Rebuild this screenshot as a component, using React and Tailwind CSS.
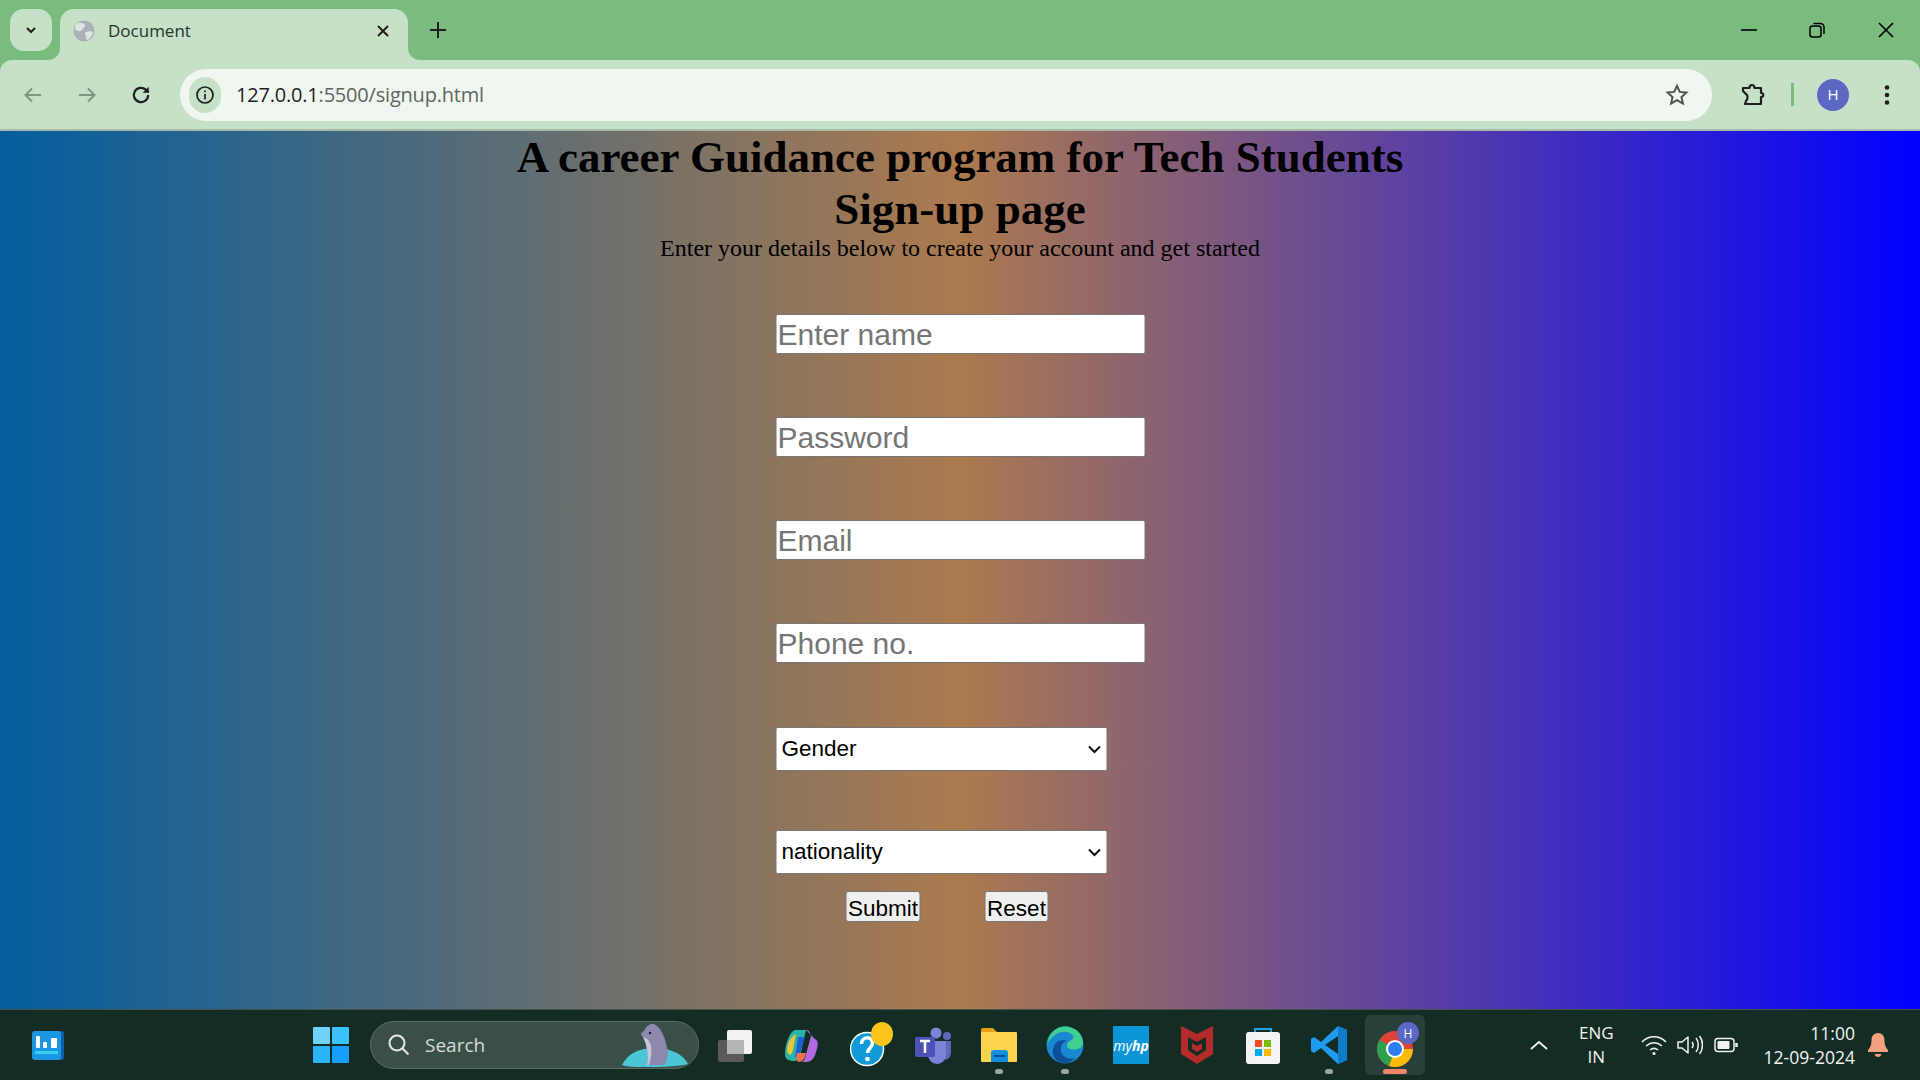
import React from "react";

const TabStrip = () => (
  <div className="flex h-[60px] items-start bg-[#7abc7e] pt-[9px] pl-[10px]">
    <div className="flex h-[42px] w-[42px] items-center justify-center rounded-[14px] bg-[#c5e1c7]">
      <svg width="14" height="14" viewBox="0 0 14 14" fill="none" stroke="#1f1f1f" strokeWidth="2">
        <path d="M3 5l4 4 4-4" />
      </svg>
    </div>
    <div className="relative ml-[8px] flex h-[51px] w-[348px] items-center rounded-t-[14px] bg-[#c5e1c7] pb-[8px] pl-[13px] pr-[18px]">
      <svg className="absolute bottom-0 left-[-12px]" width="12" height="12" viewBox="0 0 12 12">
        <path d="M0 12a12 12 0 0 0 12-12v12z" fill="#c5e1c7" />
      </svg>
      <svg className="absolute bottom-0 right-[-12px]" width="12" height="12" viewBox="0 0 12 12">
        <path d="M12 12A12 12 0 0 1 0 0v12z" fill="#c5e1c7" />
      </svg>
      <svg width="22" height="22" viewBox="0 0 22 22">
        <circle cx="11" cy="11" r="10.5" fill="#aab1b8" />
        <path d="M5 3c3 0 6 0 7 2s-2 3-3 5-4 1-6 0-1-5 2-7zM13 12c3-1 6-1 7 0-1 4-3 7-6 8-2-1 0-3-1-4s-2-3 0-4z" fill="#dfe6e2" />
      </svg>
      <span className="ml-[13px] flex-1 font-['Open_Sans',sans-serif] text-[17px] text-[#2a332b]">Document</span>
      <svg width="14" height="14" viewBox="0 0 14 14" fill="none" stroke="#1f1f1f" strokeWidth="2">
        <path d="M2 2l10 10M12 2L2 12" />
      </svg>
    </div>
    <div className="ml-[21px] mt-[12px] h-[20px]">
      <svg width="18" height="18" viewBox="0 0 18 18" fill="none" stroke="#1f1f1f" strokeWidth="2">
        <path d="M9 1v16M1 9h16" />
      </svg>
    </div>
    <div className="ml-auto flex items-center pt-[13px]">
      <svg className="mr-[52px]" width="16" height="4" viewBox="0 0 16 4" stroke="#000" strokeWidth="1.6">
        <path d="M0 2h16" />
      </svg>
      <svg className="mr-[53px]" width="16" height="16" viewBox="0 0 16 16" fill="none" stroke="#000" strokeWidth="1.5">
        <rect x="1" y="4" width="11" height="11" rx="2.5" />
        <path d="M4.5 1.5h7a3.5 3.5 0 0 1 3.500 3.500v7" />
      </svg>
      <svg className="mr-[26px]" width="16" height="16" viewBox="0 0 16 16" stroke="#000" strokeWidth="1.6">
        <path d="M1 1l14 14M15 1L1 15" />
      </svg>
    </div>
  </div>
);

const Toolbar = () => (
  <div className="bg-[#7abc7e]">
    <div className="flex h-[69px] items-center rounded-t-[12px] bg-[#c5e1c7] pl-[23px] pr-[30px]">
      <svg width="20" height="20" viewBox="0 0 20 20" fill="none" stroke="#7f9481" strokeWidth="2">
        <path d="M18 10H3M9 3.500L2.500 10 9 16.500" />
      </svg>
      <svg className="ml-[34px]" width="20" height="20" viewBox="0 0 20 20" fill="none" stroke="#7f9481" strokeWidth="2">
        <path d="M2 10h15M11 3.500l6.500 6.500-6.500 6.500" />
      </svg>
      <svg className="ml-[33px]" width="22" height="22" viewBox="0 0 20 20" fill="none" stroke="#1f1f1f" strokeWidth="2">
        <path d="M16.500 10a6.500 6.500 0 1 1-2-4.700L17 7.500" />
        <path d="M17 2.500v5.500h-5.500" fill="#1f1f1f" stroke="none" />
      </svg>
      <div className="ml-[28px] flex h-[52px] flex-1 items-center rounded-full bg-[#f0f7f1] pl-[9px] pr-[23px]">
        <div className="flex h-[36px] w-[32px] items-center justify-center rounded-full bg-[#c5e1c7]">
          <svg width="20" height="20" viewBox="0 0 20 20" fill="none" stroke="#1f1f1f" strokeWidth="1.700">
            <circle cx="10" cy="10" r="8" />
            <path d="M10 9v5.500M10 5.500v1.800" />
          </svg>
        </div>
        <span className="ml-[15px] flex-1 font-['Open_Sans',sans-serif] text-[20px] tracking-[-0.2px] text-[#5f6660]">
          <span className="text-[#1f1f1f]">127.0.0.1</span>:5500/signup.html
        </span>
        <svg width="24" height="24" viewBox="0 0 24 24" fill="none" stroke="#4d5350" strokeWidth="2">
          <path d="M12 2.800l2.800 6.100 6.600.7-4.900 4.500 1.400 6.500-5.900-3.400-5.900 3.400 1.400-6.500-4.900-4.500 6.600-.7z" />
        </svg>
      </div>
      <svg className="ml-[28px]" width="26" height="26" viewBox="0 0 26 26" fill="none" stroke="#1f1f1f" strokeWidth="2.200">
        <path d="M3 6h6.500c0-4 5-4 5 0H21v5c3 0 3 4 0 4v7H5l1-3c2-2 2-6 0-7L3 9z" strokeLinejoin="round" />
      </svg>
      <div className="ml-[25px] h-[23px] w-[3px] bg-[#7abc7e]" />
      <div className="ml-[23px] flex h-[32px] w-[32px] items-center justify-center rounded-full bg-[#5b68c3] font-['Open_Sans',sans-serif] text-[15px] text-white">
        H
      </div>
      <svg className="ml-[35px]" width="6" height="22" viewBox="0 0 6 22" fill="#1f1f1f">
        <circle cx="3" cy="3.500" r="2.300" />
        <circle cx="3" cy="11" r="2.300" />
        <circle cx="3" cy="18.500" r="2.300" />
      </svg>
    </div>
    <div className="h-[2px] bg-[#a8b9a9]" />
  </div>
);

const Chevron = () => (
  <svg
    className="pointer-events-none absolute right-[5px] top-[14px]"
    width="16"
    height="16"
    viewBox="0 0 16 16"
    fill="none"
    stroke="#111"
    strokeWidth="2"
  >
    <path d="M2.500 5.500L8 11l5.500-5.500" />
  </svg>
);

const SignUpPage = () => (
  <div className="h-[878px] bg-[linear-gradient(to_right,#035e9f,#ac7a4e,#0000ff)] font-['Liberation_Serif',serif] text-black">
    <h1 className="text-center text-[45px] font-bold leading-[52px]">
      A career Guidance program for Tech Students
    </h1>
    <h1 className="text-center text-[45px] font-bold leading-[52px]">Sign-up page</h1>
    <p className="text-center text-[24px] leading-[27px]">
      Enter your details below to create your account and get started
    </p>
    <form className="mx-auto mt-[52px] w-[370px] translate-x-[0.5px] font-['Liberation_Sans',sans-serif]">
      <input
        type="text"
        placeholder="Enter name"
        className="mb-[63px] block h-[40px] w-full rounded-[2px] border border-[#767676] bg-white px-[1px] text-[30px] placeholder:text-[#757575]"
      />
      <input
        type="password"
        placeholder="Password"
        className="mb-[63px] block h-[40px] w-full rounded-[2px] border border-[#767676] bg-white px-[1px] text-[30px] placeholder:text-[#757575]"
      />
      <input
        type="email"
        placeholder="Email"
        className="mb-[63px] block h-[40px] w-full rounded-[2px] border border-[#767676] bg-white px-[1px] text-[30px] placeholder:text-[#757575]"
      />
      <input
        type="text"
        placeholder="Phone no."
        className="mb-[64px] block h-[40px] w-full rounded-[2px] border border-[#767676] bg-white px-[1px] text-[30px] placeholder:text-[#757575]"
      />
      <div className="relative mb-[59px] w-[332px]">
        <select className="block h-[44px] w-full appearance-none rounded-[2px] border border-[#767676] bg-white pl-[5px] text-[22.5px] text-black">
          <option>Gender</option>
          <option>Male</option>
          <option>Female</option>
        </select>
        <Chevron />
      </div>
      <div className="relative w-[332px]">
        <select className="block h-[44px] w-full appearance-none rounded-[2px] border border-[#767676] bg-white pl-[5px] text-[22.5px] text-black">
          <option>nationality</option>
          <option>Indian</option>
          <option>Other</option>
        </select>
        <Chevron />
      </div>
      <div className="mt-[17px] flex pl-[70px]">
        <button type="submit" className="h-[31px] w-[75px] rounded-[3px] border border-[#767676] bg-[#efefef] text-[22.5px]">
          Submit
        </button>
        <button type="reset" className="ml-[64px] h-[31px] w-[64px] rounded-[3px] border border-[#767676] bg-[#efefef] text-[22.5px]">
          Reset
        </button>
      </div>
    </form>
  </div>
);

const TaskIcon = ({ children, dot, active }) => (
  <div className="flex h-[60px] w-[66px] justify-center">
    <div
      className={
        "relative flex h-[60px] w-[60px] items-center justify-center rounded-[6px] " +
        (active ? "bg-[#27403a]" : "")
      }
    >
      {children}
      {dot && <div className="absolute bottom-[1px] h-[5px] w-[8px] rounded-full bg-[#9aa5a1]" />}
      {active && <div className="absolute bottom-[1px] h-[5px] w-[24px] rounded-full bg-[#ee8468]" />}
    </div>
  </div>
);

const Taskbar = () => (
  <div className="flex h-[71px] items-center border-t border-[#46534c] bg-[#132d25] font-['Open_Sans',sans-serif] text-white">
    {/* widgets */}
    <svg className="ml-[31px]" width="34" height="34" viewBox="0 0 34 34">
      <rect x="4" y="3" width="29" height="29" rx="3" fill="#0f5fa8" />
      <rect x="1" y="3" width="29" height="29" rx="3" fill="#1a97e0" />
      <rect x="5" y="8" width="4" height="12" rx="1" fill="#fff" />
      <rect x="12" y="14" width="4" height="6" rx="1" fill="#fff" />
      <rect x="20" y="10" width="6" height="10" rx="1" fill="#fff" />
      <rect x="4" y="23" width="23" height="3" fill="#35d1ee" />
    </svg>
    {/* start */}
    <svg className="ml-[248px]" width="36" height="36" viewBox="0 0 36 36">
      <rect x="0" y="0" width="17" height="17" rx="1" fill="#6fd2fb" />
      <rect x="19" y="0" width="17" height="17" rx="1" fill="#3cc2fb" />
      <rect x="0" y="19" width="17" height="17" rx="1" fill="#29b4fb" />
      <rect x="19" y="19" width="17" height="17" rx="1" fill="#159efa" />
    </svg>
    {/* search */}
    <div className="ml-[21px] flex h-[48px] w-[329px] items-center rounded-full border border-[#5a6c65] bg-[#3a4f47] pl-[16px]">
      <svg width="24" height="24" viewBox="0 0 24 24" fill="none" stroke="#e6e9e7" strokeWidth="2">
        <circle cx="10" cy="10" r="7.500" />
        <path d="M15.500 15.500l6 6" />
      </svg>
      <span className="ml-[14px] flex-1 text-[19px] text-[#d8dcda]">Search</span>
      <svg className="mr-[8px]" width="70" height="44" viewBox="0 0 70 44">
        <path d="M2 42c6-12 18-17 33-17s28 6 33 16c-8 3-58 5-66 1z" fill="#4cc6d6" />
        <path d="M23 14c-3-2-2-5 1-6 2-5 7-8 10-7 7 3 12 14 14 30-1 5-2 9-4 11H27c2-10 0-20-4-28z" fill="#8e88ad" />
        <path d="M23 14c4 1 7 4 8 9 1 6 0 13-2 19h-2c2-10 0-20-4-28z" fill="#c9c6da" />
        <circle cx="30" cy="10" r="1.200" fill="#1b1b2b" />
      </svg>
    </div>
    {/* pinned apps */}
    <div className="ml-[3px] flex items-center">
      <TaskIcon>
        <svg width="36" height="36" viewBox="0 0 36 36">
          <rect x="1" y="13" width="26" height="22" rx="2" fill="#5a5a5a" />
          <rect x="10" y="3" width="25" height="24" rx="2" fill="#f2f2f2" />
          <rect x="10" y="13" width="17" height="14" fill="#b5b5b5" />
        </svg>
      </TaskIcon>
      <TaskIcon>
        <svg width="36" height="36" viewBox="0 0 36 36">
          <path d="M12 3h11l-6 26c-1 4-3 5-6 5-6 0-9-2-9-7 0-8 4-22 10-24z" fill="#2ab3a8" />
          <path d="M4 24c0-8 4-15 9-17l-3 16c-1 4-3 8-6 1z" fill="#e8c53a" />
          <path d="M23 3c3 0 4 2 5 6l-6 22c-1 3-2 4-6 4h7c5 0 8-3 10-10 2-6 3-11-1-13z" fill="#b46ae0" />
          <path d="M15 10h7l-5 16c-1 2-2 4-5 4z" fill="#1d5fd6" />
          <path d="M15 35c-2-3-2-6-1-9h9c-1 5-3 9-8 9z" fill="#f0714a" />
        </svg>
      </TaskIcon>
      <TaskIcon>
        <svg className="ml-[10px]" width="44" height="46" viewBox="0 0 44 46">
          <circle cx="17" cy="27" r="16.500" fill="#0d9ad6" stroke="#fff" strokeWidth="1.500" />
          <path d="M11.500 22c0-8 11-8 11-1 0 5-5 5-5 10" fill="none" stroke="#fff" strokeWidth="3.500" />
          <circle cx="17.500" cy="37" r="2.300" fill="#fff" />
          <ellipse cx="32" cy="12" rx="11" ry="12" fill="#fcc419" />
        </svg>
      </TaskIcon>
      <TaskIcon>
        <svg width="38" height="38" viewBox="0 0 38 38">
          <circle cx="22" cy="7" r="5.500" fill="#7b83d6" />
          <circle cx="33" cy="10" r="4" fill="#5f67b8" />
          <path d="M28 15h9v11c0 5-3 8-7 8z" fill="#5f67b8" />
          <path d="M14 15h18v14a9 9 0 0 1-18 0z" fill="#7b83d6" />
          <rect x="1" y="11" width="20" height="20" rx="2" fill="#4b53b8" />
          <path d="M6 15h10M11 15v12" stroke="#fff" strokeWidth="2.500" />
        </svg>
      </TaskIcon>
      <TaskIcon dot>
        <svg width="38" height="36" viewBox="0 0 38 36">
          <path d="M1 3a2 2 0 0 1 2-2h10l4 4h-16z" fill="#e3a21a" />
          <path d="M1 5h35a1 1 0 0 1 1 1v28a1 1 0 0 1-1 1H2a1 1 0 0 1-1-1z" fill="#fcd34d" />
          <path d="M11 35v-9a3 3 0 0 1 3-3h11a3 3 0 0 1 3 3v9z" fill="#0f8fe0" />
          <path d="M14 29h11" stroke="#074f96" strokeWidth="2" />
        </svg>
      </TaskIcon>
      <TaskIcon dot>
        <svg width="38" height="38" viewBox="0 0 38 38">
          <circle cx="19" cy="19" r="18.500" fill="#1b87d0" />
          <path d="M1 19C2 8 10 .5 19 .5c11 0 18 8 18 16 0 5-4 7-9 7-4 0-7-1-7-4 0-6 8-4 6-10C24 5 15 4 9 9c-4 3-7 6-8 10z" fill="#3fcf90" />
          <path d="M16 37c-8-2-11-10-8-17 2-5 8-7 13-5-5 1-7 5-6 10 1 6 8 9 14 7-4 4-8 6-13 5z" fill="#0f4f96" />
        </svg>
      </TaskIcon>
      <TaskIcon>
        <div className="flex h-[38px] w-[36px] items-center justify-center bg-[#0a96d6] text-[14px] italic text-white">
          my<span className="font-bold">hp</span>
        </div>
      </TaskIcon>
      <TaskIcon>
        <svg width="32" height="38" viewBox="0 0 32 38">
          <path d="M0 0l16 8 16-8v28l-16 10L0 28z" fill="#b32b2b" />
          <path d="M7 11l9 5 9-5v13l-9 6-9-6z" fill="#132d25" />
          <path d="M11 17l5 3 5-3v6l-5 3-5-3z" fill="#b32b2b" />
        </svg>
      </TaskIcon>
      <TaskIcon>
        <svg width="36" height="38" viewBox="0 0 36 38">
          <path d="M10 7V3h16v4" fill="none" stroke="#1fa3e0" strokeWidth="2" />
          <rect x="1" y="6" width="34" height="32" rx="3" fill="#f4f4f4" />
          <rect x="10" y="14" width="7" height="7" fill="#f25022" />
          <rect x="19" y="14" width="7" height="7" fill="#7fba00" />
          <rect x="10" y="23" width="7" height="7" fill="#00a4ef" />
          <rect x="19" y="23" width="7" height="7" fill="#ffb900" />
        </svg>
      </TaskIcon>
      <TaskIcon dot>
        <svg width="36" height="38" viewBox="0 0 36 38">
          <path d="M27 0l9 4v30l-9 4-17-16-7 5-3-2v-12l3-2 7 5z" fill="#1f9cf0" />
          <path d="M27 10L14 19l13 9z" fill="#132d25" />
          <path d="M27 0l9 4v30l-9 4z" fill="#0e7cc8" />
        </svg>
      </TaskIcon>
      <TaskIcon active>
        <svg className="ml-[6px]" width="44" height="46" viewBox="0 0 44 46">
          <circle cx="19" cy="27" r="18" fill="#dc4437" />
          <path d="M19 27L3.500 18A18 18 0 0 0 13 44z" fill="#2ea24f" />
          <path d="M19 27l-6 17a18 18 0 0 0 24-17z" fill="#fbbc05" />
          <circle cx="19" cy="27" r="9" fill="#fff" />
          <circle cx="19" cy="27" r="7" fill="#2a7fed" />
          <circle cx="32" cy="11" r="11" fill="#5b68c3" />
          <text x="32" y="15.500" textAnchor="middle" fontSize="12" fontFamily="Open Sans, sans-serif" fill="#fff">H</text>
        </svg>
      </TaskIcon>
    </div>
    {/* tray */}
    <svg className="ml-[102px]" width="18" height="10" viewBox="0 0 18 10" fill="none" stroke="#f2f2f2" strokeWidth="1.800">
      <path d="M1 9l8-7 8 7" />
    </svg>
    <div className="ml-[31px] text-center text-[17px] leading-[24px] text-[#f2f2f2]">
      <div>ENG</div>
      <div>IN</div>
    </div>
    <svg className="ml-[27px]" width="26" height="22" viewBox="0 0 26 22" fill="none" stroke="#f2f2f2" strokeWidth="1.600">
      <path d="M1 8c7-7 17-7 24 0M5 12c5-4 11-4 16 0M9 16c2.500-2 5.500-2 8 0" />
      <circle cx="13" cy="19.500" r="1.500" fill="#f2f2f2" stroke="none" />
    </svg>
    <svg className="ml-[10px]" width="26" height="22" viewBox="0 0 26 22" fill="none" stroke="#f2f2f2" strokeWidth="1.500">
      <path d="M1 8v6h4l6 5V3L5 8z" strokeLinejoin="round" />
      <path d="M15 8c1.500 2 1.500 4 0 6M19 4c3 4 3 10 0 14M22.500 2c4 5 4 13 0 18" />
    </svg>
    <svg className="ml-[11px]" width="24" height="16" viewBox="0 0 24 16" fill="none" stroke="#f2f2f2" strokeWidth="1.500">
      <rect x="1" y="1.500" width="19" height="13" rx="3" />
      <rect x="3.500" y="4" width="12" height="8" rx="1" fill="#f2f2f2" stroke="none" />
      <path d="M22.500 6v4" strokeWidth="2.500" />
    </svg>
    <div className="ml-[26px] text-right text-[17.5px] leading-[24px] text-[#f2f2f2]">
      <div>11:00</div>
      <div>12-09-2024</div>
    </div>
    <svg className="ml-[12px]" width="22" height="26" viewBox="0 0 22 26" fill="#f5a07e">
      <path d="M11 1c-4 0-6.500 3-6.500 7 0 5-1 7-3.500 10v2h20v-2c-2.500-3-3.500-5-3.500-10 0-4-2.500-7-6.500-7z" />
      <path d="M7.500 22h7c-.5 2-2 3-3.500 3s-3-1-3.500-3z" />
    </svg>
  </div>
);

export default function App() {
  return (
    <div className="h-screen w-full overflow-hidden">
      <TabStrip />
      <Toolbar />
      <SignUpPage />
      <Taskbar />
    </div>
  );
}
